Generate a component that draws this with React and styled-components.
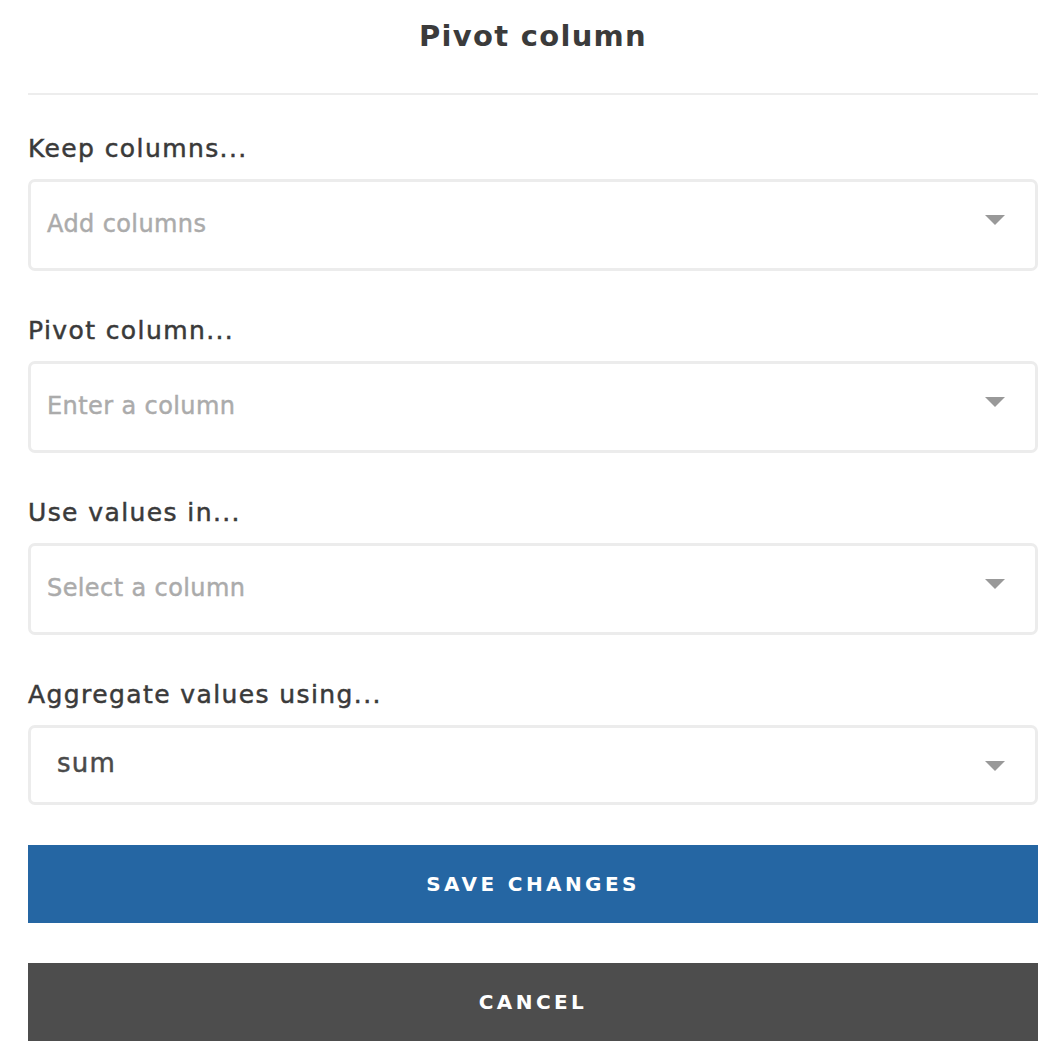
import React, { useState } from "react";
import styled, { createGlobalStyle } from "styled-components";

const GlobalStyle = createGlobalStyle`
    body {
        margin: 0;
        background: #fff;
        font-family: "DejaVu Sans", "Open Sans", sans-serif;
        color: #3d3d3d;
    }
`;

const Modal = styled.div`
    width: 1010px;
    padding: 0 16px 0 28px;
`;

const Header = styled.div`
    height: 95px;
    display: flex;
    align-items: flex-start;
    justify-content: center;
    border-bottom: 2px solid #ededed;
    box-sizing: border-box;
`;

const Title = styled.h2`
    margin: 18px 0 0;
    font-size: 29px;
    line-height: 36px;
    font-weight: 700;
    color: #3b3b3b;
    letter-spacing: 1.3px;
`;

const Field = styled.div`
    display: flex;
    flex-direction: column;
    margin-top: ${(p) => p.$top}px;
`;

const Label = styled.label`
    font-size: 25px;
    font-weight: 400;
    color: #3a3a3a;
    line-height: 32px;
    margin-bottom: 14px;
    letter-spacing: 1.4px;
    -webkit-text-stroke: 0.5px #3a3a3a;
`;

const SelectBox = styled.div`
    height: ${(p) => p.$height}px;
    box-sizing: border-box;
    border: 3px solid #ececec;
    border-radius: 7px;
    display: flex;
    align-items: center;
    justify-content: space-between;
    padding: 0 30px 0 ${(p) => (p.$value ? 26 : 16)}px;
    cursor: pointer;
`;

const SelectText = styled.span`
    font-size: ${(p) => (p.$value ? 26 : 24)}px;
    font-weight: 400;
    letter-spacing: ${(p) => (p.$value ? 1.2 : 0.4)}px;
    color: ${(p) => (p.$value ? "#4a4a4a" : "#ababab")};
    -webkit-text-stroke: 0.45px ${(p) => (p.$value ? "#4a4a4a" : "#ababab")};
    margin-top: ${(p) => (p.$value ? -4 : -2)}px;
`;

const Caret = styled.svg`
    width: 20px;
    height: 10px;
    margin-top: ${(p) => (p.$value ? 2 : -10)}px;
    fill: #999;
`;

const Actions = styled.div`
    display: flex;
    flex-direction: column;
    gap: 40px;
    margin-top: 40px;
`;

const Button = styled.button`
    height: 78px;
    width: 100%;
    border: none;
    background: ${(p) => (p.$primary ? "#2566a3" : "#4d4d4d")};
    color: #fff;
    font-family: "DejaVu Sans", "Open Sans", sans-serif;
    font-size: 20px;
    font-weight: 700;
    letter-spacing: 3.4px;
    text-transform: uppercase;
    cursor: pointer;
`;

const fields = [
    { label: "Keep columns...", placeholder: "Add columns", top: 38 },
    { label: "Pivot column...", placeholder: "Enter a column", top: 44 },
    { label: "Use values in...", placeholder: "Select a column", top: 44 },
    { label: "Aggregate values using...", value: "sum", top: 44 },
];

const App = () => {
    const [values] = useState(fields);

    return (
        <Modal>
            <GlobalStyle />
            <Header>
                <Title>Pivot column</Title>
            </Header>
            {values.map((f) => (
                <Field key={f.label} $top={f.top}>
                    <Label>{f.label}</Label>
                    <SelectBox $value={!!f.value} $height={f.value ? 80 : 92}>
                        <SelectText $value={!!f.value}>{f.value || f.placeholder}</SelectText>
                        <Caret viewBox="0 0 20 10" $value={!!f.value}>
                            <path d="M0 0 L20 0 L10 10 Z" />
                        </Caret>
                    </SelectBox>
                </Field>
            ))}
            <Actions>
                <Button $primary>Save changes</Button>
                <Button>Cancel</Button>
            </Actions>
        </Modal>
    );
};

export default App;
